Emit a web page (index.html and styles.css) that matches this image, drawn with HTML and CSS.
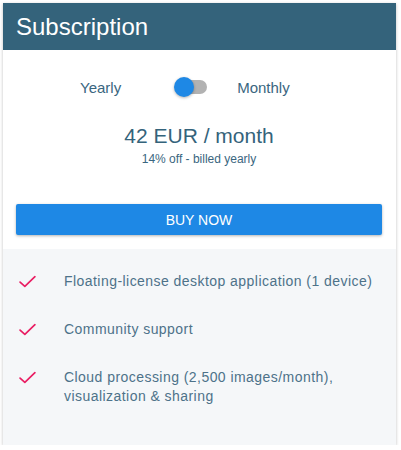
FILE: index.html
```html
<!DOCTYPE html>
<html lang="en">
<head>
    <meta charset="UTF-8" />
    <meta name="viewport" content="width=device-width, initial-scale=1.0"/>
    <title>Subscription</title>
    <link rel="stylesheet" href="styles.css">
</head>
<body>

    <div class="plan-card">
        <div class="plan-header">
            <h1>Subscription</h1>
        </div>

        <div class="plan-body">
            <div class="billing-switch">
                <span class="billing-label">Yearly</span>
                <span class="toggle">
                    <span class="toggle-track"></span>
                    <span class="toggle-knob"></span>
                </span>
                <span class="billing-label">Monthly</span>
            </div>

            <div class="price">42 EUR / month</div>
            <div class="price-note">14% off - billed yearly</div>

            <button class="buy-button">BUY NOW</button>
        </div>

        <ul class="feature-list">
            <li>
                <svg class="check" viewBox="0 0 16 12" width="16" height="12">
                    <path d="M1 6.5 L5.5 10.5 L15 1.5" fill="none" stroke="#e91e63" stroke-width="1.6" stroke-linecap="round" stroke-linejoin="round"/>
                </svg>
                <span>Floating-license desktop application (1 device)</span>
            </li>
            <li>
                <svg class="check" viewBox="0 0 16 12" width="16" height="12">
                    <path d="M1 6.5 L5.5 10.5 L15 1.5" fill="none" stroke="#e91e63" stroke-width="1.6" stroke-linecap="round" stroke-linejoin="round"/>
                </svg>
                <span>Community support</span>
            </li>
            <li>
                <svg class="check" viewBox="0 0 16 12" width="16" height="12">
                    <path d="M1 6.5 L5.5 10.5 L15 1.5" fill="none" stroke="#e91e63" stroke-width="1.6" stroke-linecap="round" stroke-linejoin="round"/>
                </svg>
                <span>Cloud processing (2,500 images/month), visualization &amp; sharing</span>
            </li>
        </ul>
    </div>

</body>
</html>
```

FILE: styles.css
```css
body {
    margin: 0;
    padding: 3px 5px 0 3px;
    background: #ffffff;
    font-family: "Liberation Sans", Arial, sans-serif;
}

.plan-card {
    width: 393px;
    background: #ffffff;
    box-shadow: 0 1px 3px rgba(0, 0, 0, 0.25);
}

.plan-header {
    background: #34637b;
    height: 47px;
    display: flex;
    align-items: center;
    padding: 0 13px;
}

.plan-header h1 {
    margin: 0;
    color: #ffffff;
    font-weight: normal;
    font-size: 24px;
}

.plan-body {
    padding: 27px 14px 14px 13px;
    text-align: center;
}

.billing-switch {
    display: flex;
    align-items: center;
    padding-left: 64px;
    color: #3a6680;
    font-size: 15px;
}

.toggle {
    position: relative;
    width: 33px;
    height: 20px;
    margin: 0 30px 0 53px;
}

.toggle-track {
    position: absolute;
    left: 3px;
    right: 0;
    top: 3px;
    height: 14px;
    border-radius: 7px;
    background: #b2b2b2;
}

.toggle-knob {
    position: absolute;
    left: 0;
    top: 0;
    width: 20px;
    height: 20px;
    border-radius: 50%;
    background: #1e88e5;
    box-shadow: 0 1px 3px rgba(0, 0, 0, 0.3);
}

.price {
    margin-top: 27px;
    font-size: 21px;
    color: #34637b;
}

.price-note {
    margin-top: 4px;
    font-size: 12px;
    color: #3a6680;
}

.buy-button {
    display: block;
    width: 100%;
    height: 31px;
    margin-top: 38px;
    border: none;
    border-radius: 2px;
    background: #1e88e5;
    color: #ffffff;
    font-family: "Liberation Sans", Arial, sans-serif;
    font-size: 14px;
    box-shadow: 0 1px 3px rgba(0, 0, 0, 0.3);
}

.feature-list {
    list-style: none;
    margin: 0;
    padding: 23px 16px 39px 16px;
    background: #f5f7f9;
}

.feature-list li {
    display: flex;
    align-items: flex-start;
    gap: 28px;
    font-size: 14px;
    line-height: 19px;
    letter-spacing: 0.45px;
    color: #4d7289;
    margin-bottom: 29px;
}

.feature-list li:last-child {
    margin-bottom: 0;
}

.check {
    flex: none;
    width: 17px;
    height: 13px;
    margin-top: 3px;
}
```
